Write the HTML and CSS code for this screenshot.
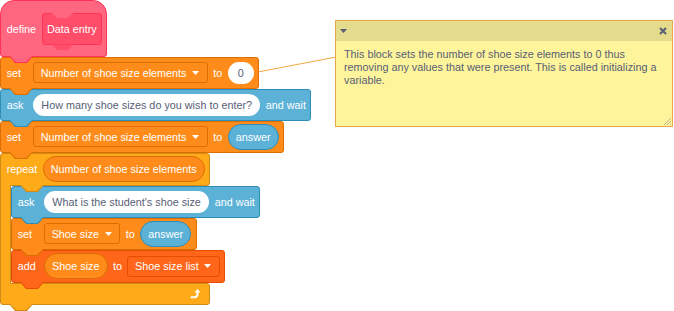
FILE: index.html
```html
<!DOCTYPE html>
<html lang="en">
<head>
  <meta charset="UTF-8" />
  <title>Data entry script</title>
  <link rel="stylesheet" href="styles.css">
</head>
<body>
<div class="workspace">

  <svg class="link" width="674" height="311">
    <line x1="258" y1="72" x2="336" y2="57" />
  </svg>

  <div class="script">
    <div class="block hat">
      <span class="label">define</span>
      <div class="proto">Data entry</div>
    </div>

    <div class="block data">
      <span class="label">set</span>
      <span class="dropdown">Number of shoe size elements <svg class="caret" width="7" height="4"><polygon points="0,0 7,0 3.5,4" /></svg></span>
      <span class="label">to</span>
      <span class="input num">0</span>
    </div>

    <div class="block sensing">
      <span class="label">ask</span>
      <span class="input">How many shoe sizes do you wish to enter?</span>
      <span class="label">and wait</span>
    </div>

    <div class="block data">
      <span class="label">set</span>
      <span class="dropdown">Number of shoe size elements <svg class="caret" width="7" height="4"><polygon points="0,0 7,0 3.5,4" /></svg></span>
      <span class="label">to</span>
      <span class="reporter sensing">answer</span>
    </div>

    <div class="c-block">
      <div class="block control c-top">
        <span class="label">repeat</span>
        <span class="reporter data">Number of shoe size elements</span>
      </div>
      <div class="c-mouth">
        <div class="c-arm"></div>
        <div class="script">
          <div class="block sensing">
            <span class="label">ask</span>
            <span class="input">What is the student's shoe size</span>
            <span class="label">and wait</span>
          </div>
          <div class="block data">
            <span class="label">set</span>
            <span class="dropdown">Shoe size <svg class="caret" width="7" height="4"><polygon points="0,0 7,0 3.5,4" /></svg></span>
            <span class="label">to</span>
            <span class="reporter sensing">answer</span>
          </div>
          <div class="block list tall">
            <span class="label">add</span>
            <span class="reporter data">Shoe size</span>
            <span class="label">to</span>
            <span class="dropdown">Shoe size list <svg class="caret" width="7" height="4"><polygon points="0,0 7,0 3.5,4" /></svg></span>
          </div>
        </div>
      </div>
      <div class="block control c-bottom">
        <svg class="loop" width="11" height="11" viewBox="0 0 11 11">
          <path d="M1.5 9.3 H4.3 C6.4 9.3 7.5 8 7.5 5.6 V4.2" fill="none" stroke="#fff" stroke-width="2" stroke-linecap="round" />
          <polygon points="4.4,4.6 7.5,1 10.6,4.6" fill="#fff" />
        </svg>
      </div>
    </div>
  </div>

  <div class="comment">
    <div class="comment-bar">
      <svg width="7" height="4"><polygon points="0,0 7,0 3.5,4" /></svg>
      <svg width="8" height="8"><path d="M1 1 L7 7 M7 1 L1 7" /></svg>
    </div>
    <p class="comment-text">This block sets the number of shoe size elements to 0 thus removing any values that were present. This is called initializing a variable.</p>
    <svg class="comment-grip" width="8" height="8"><path d="M8 1 L1 8 M8 4 L4 8 M8 7 L7 8" /></svg>
  </div>

</div>
</body>
</html>
```

FILE: styles.css
```css
* {
  box-sizing: border-box;
}
body {
  margin: 0;
  font-family: "Liberation Sans", Arial, sans-serif;
  font-size: 10.8px;
  background-color: #fff;
}
.workspace {
  position: relative;
  width: 674px;
  height: 311px;
  overflow: hidden;
}

/* block colours */
.data {
  --fill: #FF8C1A;
  --stroke: #DB6E00;
}
.sensing {
  --fill: #5CB1D6;
  --stroke: #2E8EB8;
}
.control {
  --fill: #FFAB19;
  --stroke: #CF8B17;
}
.list {
  --fill: #FF661A;
  --stroke: #E64D00;
}
.hat {
  --fill: #FF6680;
  --stroke: #FF3355;
}

.script {
  display: flex;
  flex-direction: column;
  align-items: flex-start;
}
.block {
  --tab-x: 9px;
  position: relative;
  display: flex;
  align-items: center;
  gap: 5.4px;
  min-height: 32px;
  padding: 2px 4.4px 2px 5.7px;
  background-color: var(--fill);
  border: 1px solid var(--stroke);
  border-radius: 3px;
  color: #fff;
  white-space: nowrap;
}
.block.tall {
  min-height: 33px;
}
/* the tab under each block that fits the notch of the next one */
.block::before,
.block::after {
  content: "";
  position: absolute;
  z-index: 2;
  clip-path: polygon(0 0, 100% 0, calc(100% - 6px) 100%, 6px 100%);
}
.block::before {
  left: calc(var(--tab-x) - 1px);
  bottom: -7px;
  width: 24px;
  height: 7px;
  background-color: var(--stroke);
}
.block::after {
  left: var(--tab-x);
  bottom: -6px;
  width: 22px;
  height: 6px;
  background-color: var(--fill);
}
.block > .label:first-child {
  min-width: 20.9px;
}

.hat {
  border-radius: 14px 14px 3px 3px;
  padding: 12px 4px 10.6px 5.7px;
}
.proto {
  position: relative;
  display: flex;
  align-items: center;
  min-height: 32.4px;
  padding: 0 4.45px;
  background-color: #FF4D6A;
  border: 1px solid #FF3355;
  border-radius: 3px;
}
.proto::before,
.proto::after {
  content: "";
  position: absolute;
  left: 9px;
  width: 22px;
  clip-path: polygon(0 0, 100% 0, calc(100% - 6px) 100%, 6px 100%);
}
.proto::before {
  top: -1px;
  height: 5px;
  background-color: #FF6680;
}
.proto::after {
  z-index: 2;
  bottom: -6px;
  height: 6px;
  background-color: #FF4D6A;
}

.input {
  display: flex;
  align-items: center;
  height: 21.6px;
  padding: 0 8.4px;
  background-color: #fff;
  border-radius: 11px;
  color: #575E75;
}
.input.num {
  min-width: 26px;
  justify-content: center;
  padding: 0 6px;
}
.dropdown {
  display: flex;
  align-items: center;
  gap: 5.8px;
  height: 21px;
  padding: 0 7.6px 0 6.7px;
  background-color: var(--fill);
  border: 1px solid var(--stroke);
  border-radius: 3px;
}
.caret {
  fill: #fff;
}
.reporter {
  display: flex;
  align-items: center;
  height: 26px;
  padding: 0 7.1px;
  background-color: var(--fill);
  border: 1px solid var(--stroke);
  border-radius: 13px;
  color: #fff;
}

/* repeat block */
.c-block {
  display: flex;
  flex-direction: column;
}
.c-top {
  --tab-x: 20px;
  min-height: 33px;
  border-radius: 3px 3px 3px 0;
}
.c-mouth {
  display: flex;
  width: 0;
}
.c-arm {
  position: relative;
  z-index: 1;
  flex: none;
  width: 11px;
  margin: -1px 0;
  background-color: #FFAB19;
  border-left: 1px solid #CF8B17;
  border-right: 1px solid #CF8B17;
}
.c-mouth > .script {
  flex: none;
}
.c-bottom {
  justify-content: flex-end;
  min-height: 22px;
  padding: 0 8px 0 0;
  border-radius: 0 3px 3px 3px;
}

/* comment */
.link {
  position: absolute;
  left: 0;
  top: 0;
}
.link line {
  stroke: #EFA944;
  stroke-width: 1;
}
.comment {
  position: absolute;
  left: 335px;
  top: 20px;
  width: 338px;
  height: 107px;
  display: flex;
  flex-direction: column;
  background-color: #FEF49C;
  border: 1px solid #E9A84B;
}
.comment-bar {
  display: flex;
  justify-content: space-between;
  align-items: center;
  height: 20px;
  padding: 0 5px 0 4px;
  background-color: #E4DB8C;
}
.comment-bar polygon {
  fill: #575E75;
}
.comment-bar path {
  stroke: #575E75;
  stroke-width: 2;
}
.comment-text {
  margin: 0;
  padding: 7px 8px;
  line-height: 13px;
  color: #575E75;
}
.comment-grip {
  position: absolute;
  right: 1px;
  bottom: 1px;
}
.comment-grip path {
  stroke: #BDB487;
  stroke-width: 1;
}
```
